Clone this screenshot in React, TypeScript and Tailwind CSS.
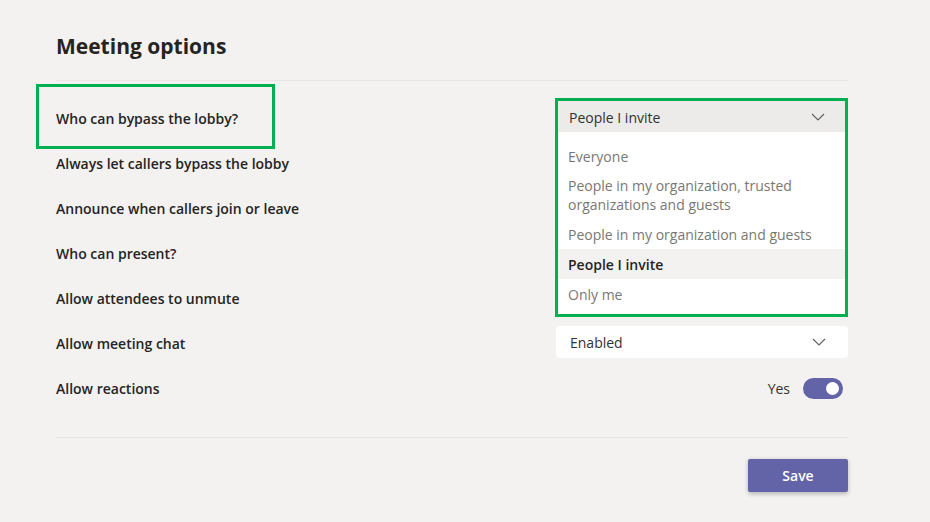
import React from "react";

const font = { fontFamily: '"Open Sans", "Noto Sans", Arial, sans-serif' };

function Chevron() {
  return (
    <svg width="14" height="8" viewBox="0 0 14 8" fill="none">
      <path d="M1 1l6 6 6-6" stroke="#605e5c" strokeWidth="1.1" />
    </svg>
  );
}

function Row({ label, children, first }: { label: string; children?: React.ReactNode; first?: boolean }) {
  return (
    <div className="flex h-[45px] items-center justify-between">
      <div className="relative text-[14px] font-semibold text-[#252423]">
        {label}
        {first && (
          <div className="absolute left-[-20px] top-[-24px] h-[65px] w-[239px] border-[3px] border-[#00b050]" />
        )}
      </div>
      <div className="relative flex h-full w-[293px] items-center justify-end">{children}</div>
    </div>
  );
}

export default function App() {
  return (
    <div className="h-[522px] w-[930px] overflow-hidden bg-[#f3f2f1]" style={font}>
      <div className="ml-[56px] w-[792px] pt-[32px]">
        <h1 className="text-[21px] font-bold leading-[28px] text-[#252423]">Meeting options</h1>
        <div className="mt-[20px] h-px bg-[#e8e6e4]" />
        <div className="mt-[15px]">
          <Row label="Who can bypass the lobby?" first>
            <div className="absolute left-0 top-[2px] z-10 w-[293px] border-[3px] border-[#00b050] bg-white">
              <div className="flex h-[31px] items-center justify-between bg-[#edebe9] pl-[11px] pr-[20px] text-[14px] text-[#323130]">
                <span className="translate-y-[1px]">People I invite</span>
                <Chevron />
              </div>
              <div className="pb-[5px] pt-[9px] text-[14px] text-[#797775]">
                <div className="flex h-[30px] items-center pl-[10px]">Everyone</div>
                <div className="py-[5px] pl-[10px] leading-[19px]">
                  People in my organization, trusted
                  <br />
                  organizations and guests
                </div>
                <div className="flex h-[30px] items-center pl-[10px]">People in my organization and guests</div>
                <div className="flex h-[30px] items-center bg-[#f3f2f1] pl-[10px] font-semibold text-[#252423]">People I invite</div>
                <div className="flex h-[30px] items-center pl-[10px]">Only me</div>
              </div>
            </div>
          </Row>
          <Row label="Always let callers bypass the lobby" />
          <Row label="Announce when callers join or leave" />
          <Row label="Who can present?" />
          <Row label="Allow attendees to unmute" />
          <Row label="Allow meeting chat">
            <div className="mb-[3px] flex h-[32px] w-[292px] items-center justify-between rounded-[4px] bg-white pl-[14px] pr-[22px] text-[14px] text-[#323130]">
              <span>Enabled</span>
              <Chevron />
            </div>
          </Row>
          <Row label="Allow reactions">
            <div className="flex items-center gap-[13px] pr-[5px]">
              <span className="text-[14px] text-[#323130]">Yes</span>
              <div className="flex h-[21px] w-[40px] items-center justify-end rounded-full bg-[#6264a7] pr-[4px]">
                <div className="h-[13px] w-[13px] rounded-full bg-white" />
              </div>
            </div>
          </Row>
        </div>
        <div className="mt-[26px] h-px bg-[#e8e6e4]" />
        <div className="mt-[21px] flex justify-end">
          <button className="h-[33px] w-[100px] rounded-[2px] bg-[#6264a7] text-[14px] font-semibold text-white shadow-[0_1.5px_4px_rgba(0,0,0,0.25)]">
            Save
          </button>
        </div>
      </div>
    </div>
  );
}
